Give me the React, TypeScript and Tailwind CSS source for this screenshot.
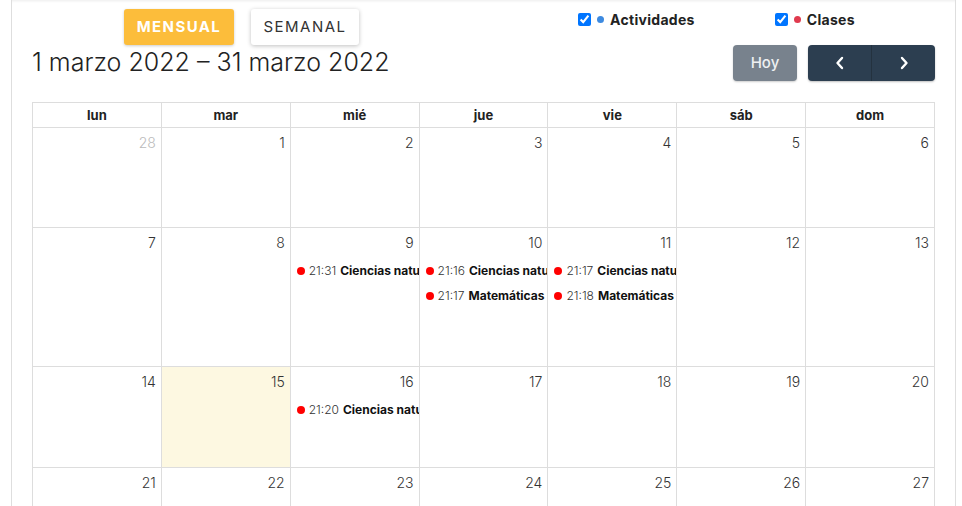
import React from 'react';

type Ev = { time: string; title: string };

const weeks: { day: number; muted?: boolean; today?: boolean; events?: Ev[] }[][] = [
  [{ day: 28, muted: true }, { day: 1 }, { day: 2 }, { day: 3 }, { day: 4 }, { day: 5 }, { day: 6 }],
  [
    { day: 7 },
    { day: 8 },
    { day: 9, events: [{ time: '21:31', title: 'Ciencias naturales' }] },
    {
      day: 10,
      events: [
        { time: '21:16', title: 'Ciencias naturales' },
        { time: '21:17', title: 'Matemáticas' },
      ],
    },
    {
      day: 11,
      events: [
        { time: '21:17', title: 'Ciencias naturales' },
        { time: '21:18', title: 'Matemáticas' },
      ],
    },
    { day: 12 },
    { day: 13 },
  ],
  [
    { day: 14 },
    { day: 15, today: true },
    { day: 16, events: [{ time: '21:20', title: 'Ciencias naturales' }] },
    { day: 17 },
    { day: 18 },
    { day: 19 },
    { day: 20 },
  ],
  [{ day: 21 }, { day: 22 }, { day: 23 }, { day: 24 }, { day: 25 }, { day: 26 }, { day: 27 }],
];

const rowHeights = ['h-[100px]', 'h-[139px]', 'h-[101px]', 'h-[101px]'];
const dayNames = ['lun', 'mar', 'mié', 'jue', 'vie', 'sáb', 'dom'];

function Legend({ label, dot }: { label: string; dot: string }) {
  return (
    <label className="flex items-center">
      <input type="checkbox" checked readOnly className="m-0 h-[13px] w-[13px]" />
      <span className={`ml-[6px] h-[7px] w-[7px] rounded-full ${dot}`} />
      <span className="ml-[6px] text-[14px] font-bold tracking-[0.3px] text-[#222]">{label}</span>
    </label>
  );
}

export default function App() {
  return (
    <div className="h-[506px] w-[962px] overflow-hidden bg-white font-['Inter',sans-serif] text-[#333]">
      <div className="ml-[11px] h-full w-[945px] border-x border-[#dedede] px-[20px] shadow-[inset_0_3px_3px_-2px_rgba(0,0,0,0.08)]">
        {/* view switch + filters */}
        <div className="flex h-[45px] items-start">
          <div className="ml-[92px] mt-[9px] flex gap-[17px]">
            <button className="h-[36px] w-[110px] rounded-[3px] bg-[#fcbd3b] text-[15px] font-bold tracking-[1.4px] text-white shadow-[0_1px_3px_rgba(0,0,0,0.2)]">
              MENSUAL
            </button>
            <button className="h-[36px] w-[108px] rounded-[3px] bg-white text-[15px] font-normal tracking-[1.5px] text-[#333] shadow-[0_1px_4px_rgba(0,0,0,0.25)]">
              SEMANAL
            </button>
          </div>
          <div className="ml-[219px] mt-[9px] flex gap-[80px]">
            <Legend label="Actividades" dot="bg-[#3d8ae0]" />
            <Legend label="Clases" dot="bg-[#e03a4e]" />
          </div>
        </div>

        {/* title + navigation */}
        <div className="flex h-[36px] items-center">
          <h2 className="text-[25px] font-light tracking-[0px] text-[#222]">1 marzo 2022 – 31 marzo 2022</h2>
          <div className="ml-auto flex gap-[11px]">
            <button className="h-[36px] w-[64px] rounded-[4px] bg-[#78828d] text-[15px] font-medium text-[#eef0f2] shadow-[0_1px_2px_rgba(0,0,0,0.2)]">
              Hoy
            </button>
            <div className="flex h-[36px] w-[127px] overflow-hidden rounded-[4px] bg-[#2c3e50] shadow-[0_1px_2px_rgba(0,0,0,0.25)]">
              <button className="flex flex-1 items-center justify-center border-r border-[#24323f] text-white">
                <svg width="12" height="14" viewBox="0 0 12 14" fill="none">
                  <path d="M8 2 L3.5 7 L8 12" stroke="white" strokeWidth="2.4" strokeLinecap="round" strokeLinejoin="round" />
                </svg>
              </button>
              <button className="flex flex-1 items-center justify-center text-white">
                <svg width="12" height="14" viewBox="0 0 12 14" fill="none">
                  <path d="M4 2 L8.5 7 L4 12" stroke="white" strokeWidth="2.4" strokeLinecap="round" strokeLinejoin="round" />
                </svg>
              </button>
            </div>
          </div>
        </div>

        {/* month grid */}
        <div className="mt-[21px] w-[903px] border-l border-t border-[#dddddd]">
          <div className="grid grid-cols-7">
            {dayNames.map((d) => (
              <div
                key={d}
                className="flex h-[25px] items-center justify-center border-b border-r border-[#dddddd] pt-[1px] text-[13px] font-bold text-[#222]"
              >
                {d}
              </div>
            ))}
          </div>
          {weeks.map((week, wi) => (
            <div key={wi} className="grid grid-cols-7">
              {week.map((cell) => (
                <div
                  key={cell.day + '-' + wi}
                  className={`${rowHeights[wi]} overflow-hidden border-b border-r border-[#dddddd] ${
                    cell.today ? 'bg-[#fdf8e1]' : 'bg-white'
                  }`}
                >
                  <div
                    className={`pr-[5px] pt-[6px] text-right text-[14px] font-light leading-[18px] ${
                      cell.muted ? 'text-[#bbbbbb]' : 'text-[#333]'
                    }`}
                  >
                    {cell.day}
                  </div>
                  <div className="mt-[10px] flex flex-col gap-[7px]">
                    {cell.events?.map((ev) => (
                      <div key={ev.time} className="flex h-[18px] items-center overflow-hidden whitespace-nowrap pl-[6px] text-[12px]">
                        <span className="mr-[4px] h-[8px] w-[8px] shrink-0 rounded-full bg-[#ff0000]" />
                        <span className="shrink-0 font-light text-[#333]">{ev.time}</span>
                        <span className="ml-[4px] min-w-0 overflow-hidden font-bold text-[#111]">{ev.title}</span>
                      </div>
                    ))}
                  </div>
                </div>
              ))}
            </div>
          ))}
        </div>
      </div>
    </div>
  );
}
